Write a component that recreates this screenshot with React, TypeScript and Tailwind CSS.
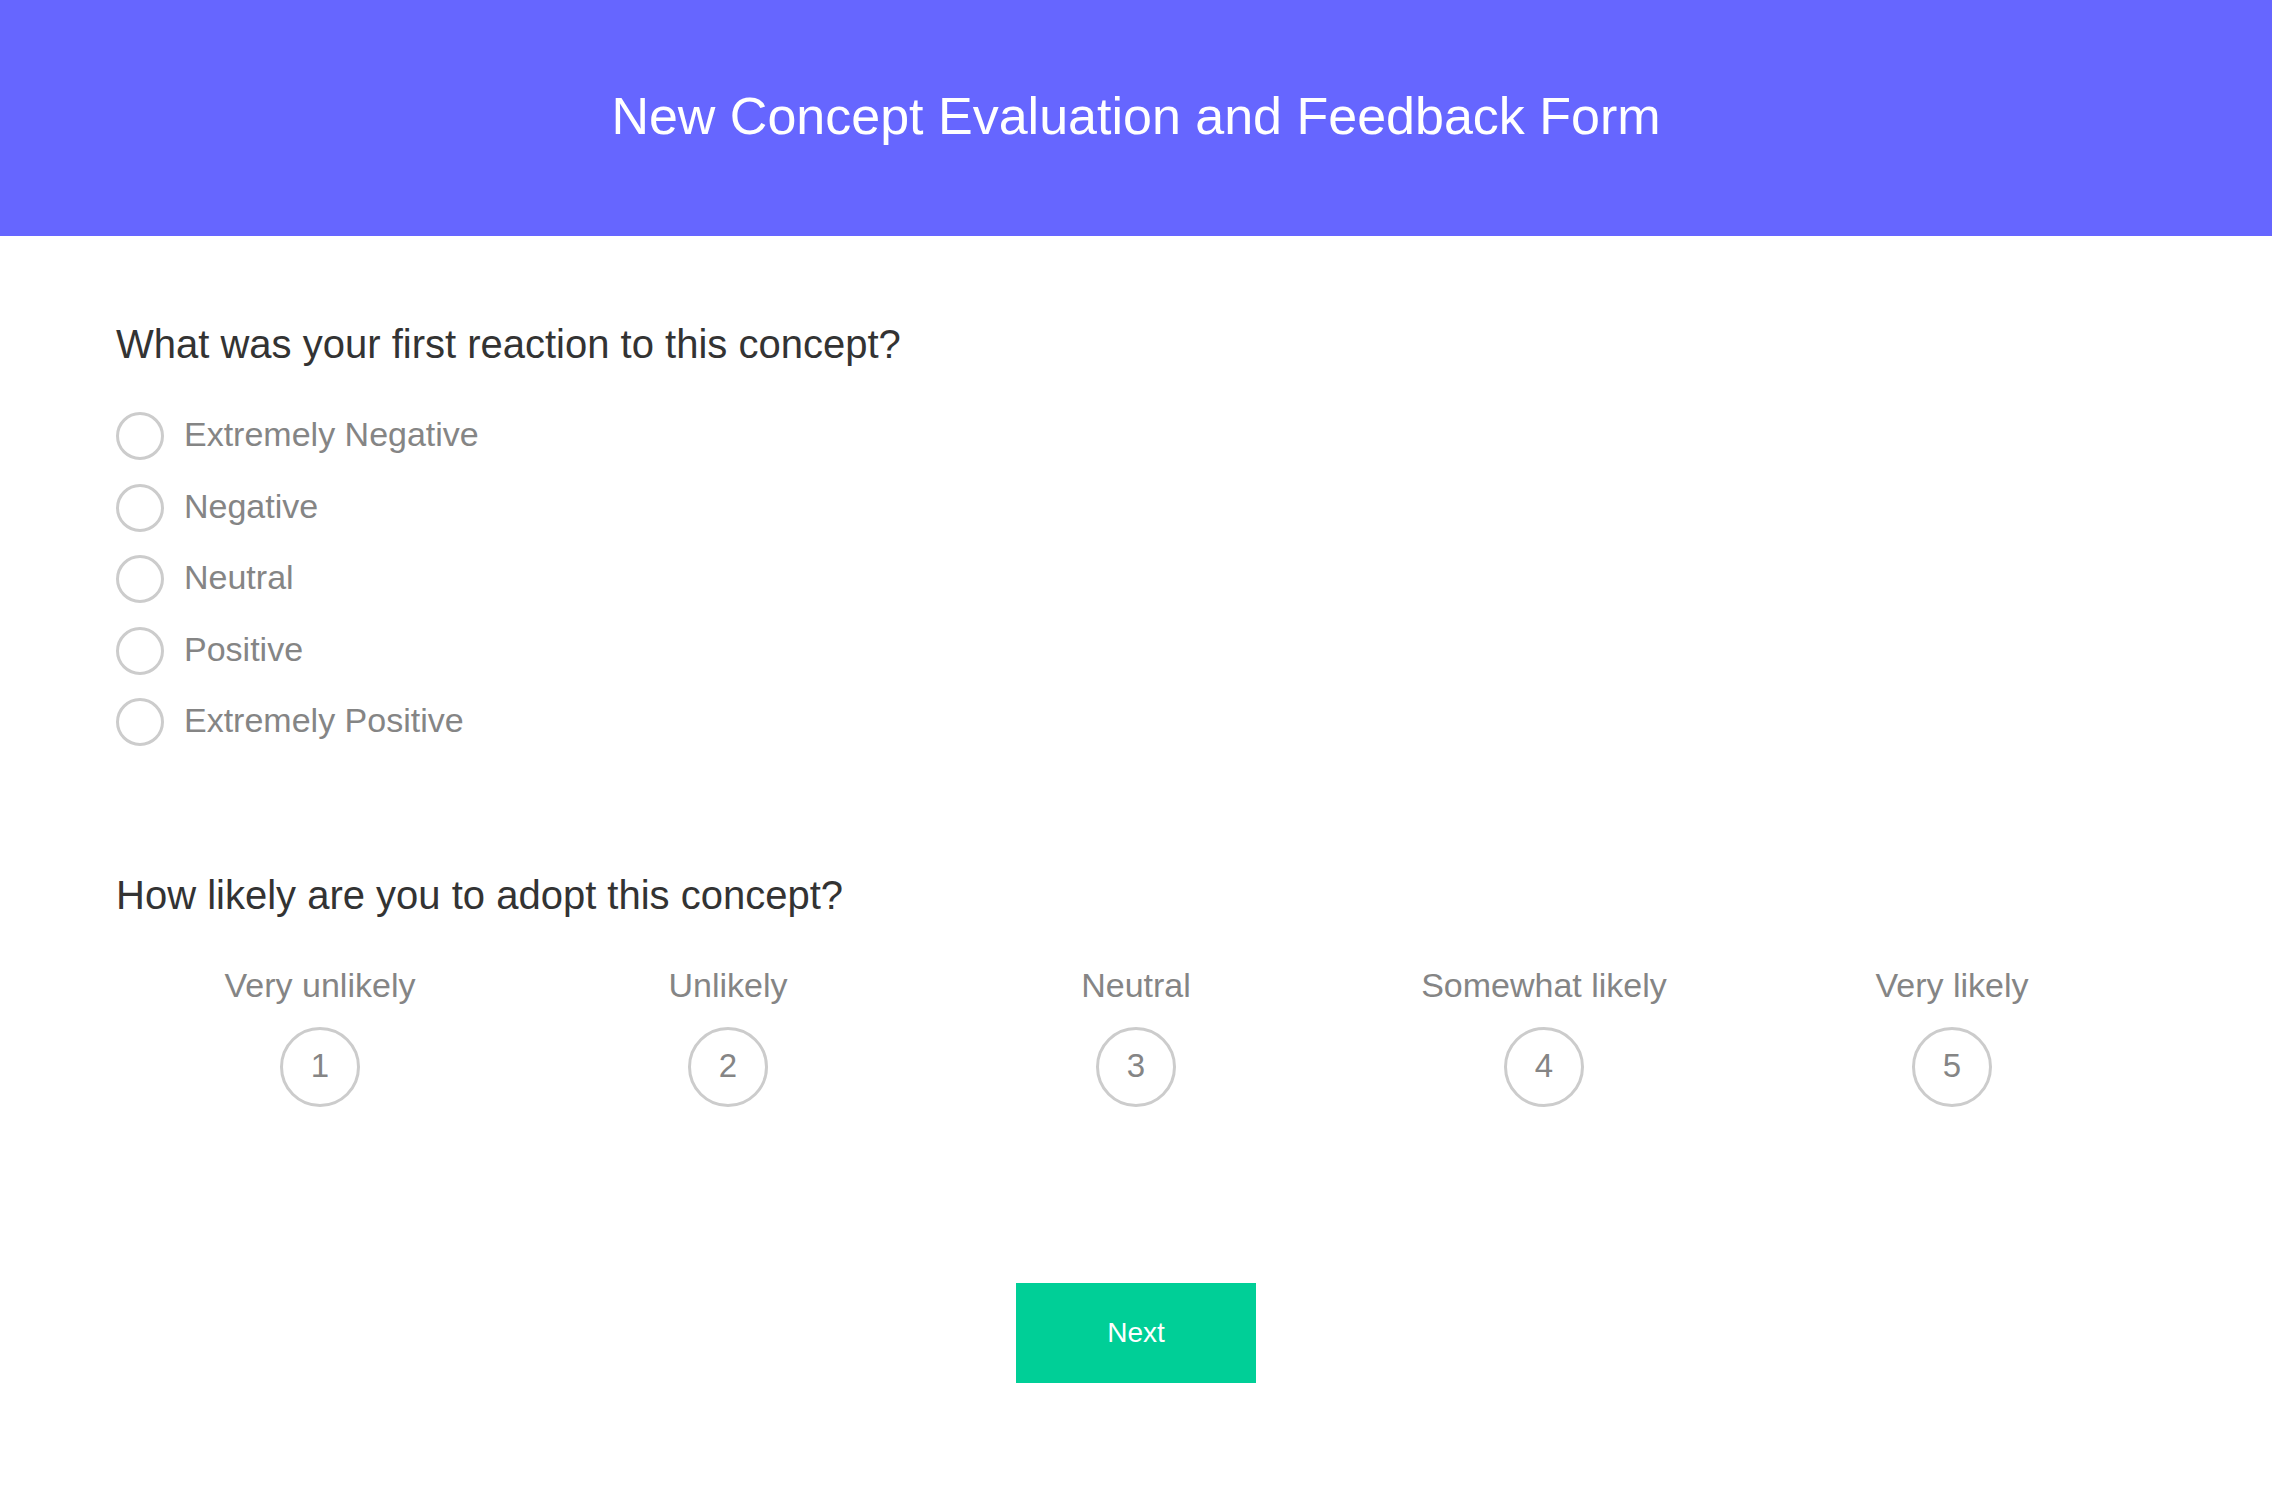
const reactions = [
  "Extremely Negative",
  "Negative",
  "Neutral",
  "Positive",
  "Extremely Positive",
];

const likelihood = [
  { label: "Very unlikely", value: 1 },
  { label: "Unlikely", value: 2 },
  { label: "Neutral", value: 3 },
  { label: "Somewhat likely", value: 4 },
  { label: "Very likely", value: 5 },
];

export default function App() {
  return (
    <div className="min-h-[1490px] bg-white font-['Liberation_Sans',Arial,Helvetica,sans-serif]">
      <header className="flex h-[236px] items-center justify-center bg-[#6666ff] pb-[5px]">
        <h1 className="text-[52px] leading-[60px] font-normal text-white">
          New Concept Evaluation and Feedback Form
        </h1>
      </header>

      <main className="px-[116px]">
        <section className="pt-[85px]">
          <h2 className="text-[40px] leading-[46px] text-[#333333]">
            What was your first reaction to this concept?
          </h2>

          <div className="mt-[45px] flex flex-col gap-[23.5px]">
            {reactions.map((option) => (
              <label key={option} className="flex h-[48px] cursor-pointer items-center gap-[20px]">
                <span className="h-[48px] w-[48px] shrink-0 rounded-full border-[3px] border-[#cccccc]" />
                <span className="pb-[3px] text-[34px] leading-[45px] text-[#858585]">{option}</span>
              </label>
            ))}
          </div>
        </section>

        <section className="pt-[126px]">
          <h2 className="text-[40px] leading-[46px] text-[#333333]">
            How likely are you to adopt this concept?
          </h2>

          <div className="mt-[48px] grid grid-cols-5">
            {likelihood.map((item) => (
              <div key={item.value} className="flex flex-col items-center">
                <span className="text-[34px] leading-[38px] text-[#858585]">{item.label}</span>
                <button
                  type="button"
                  className="mt-[23px] flex h-[80px] w-[80px] items-center justify-center rounded-full border-[3px] border-[#cccccc] pb-[3px] text-[33px] text-[#858585]"
                >
                  {item.value}
                </button>
              </div>
            ))}
          </div>
        </section>

        <div className="flex justify-center pt-[176px]">
          <button
            type="button"
            className="h-[100px] w-[240px] bg-[#00cf97] text-[28px] font-medium text-white"
          >
            Next
          </button>
        </div>
      </main>
    </div>
  );
}
